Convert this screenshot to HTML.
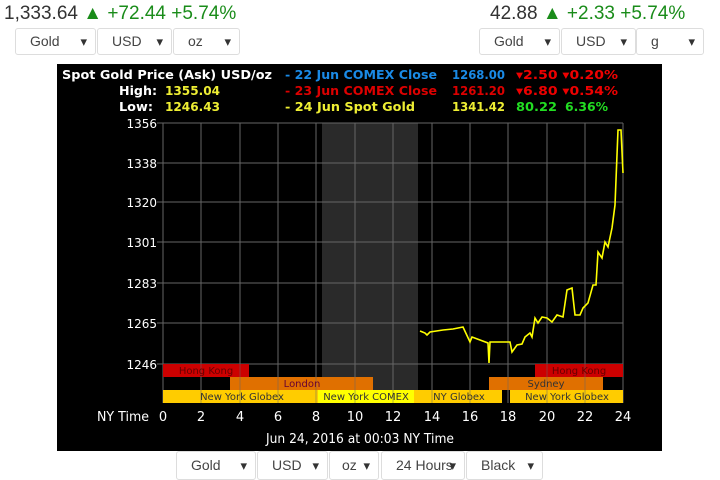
<!DOCTYPE html><html><head><style>
body{margin:0;width:720px;height:480px;background:#fff;font-family:"Liberation Sans",sans-serif;position:relative;overflow:hidden}
.t{position:absolute;font-size:19px;color:#333;top:3px}
.g{color:#1a8c1a}
.s{position:absolute;height:27px;border:1px solid #ddd;border-radius:3px;box-sizing:border-box;font-size:14px;color:#444;line-height:25px;padding-left:14px}
.s:after{content:"▾";position:absolute;right:8px;font-size:13px;color:#333}
</style></head><body>
<div class="t" style="left:4px">1,333.64 <span class="g">▲ +72.44 +5.74%</span></div>
<div class="t" style="left:490px">42.88 <span class="g">▲ +2.33 +5.74%</span></div>
<div class="s" style="left:15px;top:28px;width:81px">Gold</div>
<div class="s" style="left:97px;top:28px;width:75px">USD</div>
<div class="s" style="left:173px;top:28px;width:67px">oz</div>
<div class="s" style="left:479px;top:28px;width:81px">Gold</div>
<div class="s" style="left:561px;top:28px;width:75px">USD</div>
<div class="s" style="left:636px;top:28px;width:68px">g</div>
<svg style="position:absolute;left:57px;top:64px" width="605" height="387" viewBox="57 64 605 387" font-family="DejaVu Sans,sans-serif">
<rect x="57" y="64" width="605" height="387" fill="#000"/>
<rect x="322" y="123" width="96" height="267" fill="#2a2a2a"/>
<g stroke="#666" stroke-width="1">
<path d="M163 123V403M201 123V403M240 123V403M278 123V403M316 123V403M355 123V403M393 123V403M432 123V403M470 123V403M508 123V403M547 123V403M585 123V403M623 123V403"/>
<path d="M157 123H623M157 163H623M157 202H623M157 242H623M157 283H623M157 323H623M157 364H623"/>
</g>
<g font-size="12" fill="#fff" text-anchor="end"><text x="157" y="128">1356</text><text x="157" y="168">1338</text><text x="157" y="207">1320</text><text x="157" y="247">1301</text><text x="157" y="288">1283</text><text x="157" y="328">1265</text><text x="157" y="369">1246</text></g>
<rect x="163" y="364" width="86" height="13" fill="#c00"/><rect x="535" y="364" width="88" height="13" fill="#c00"/>
<rect x="230" y="377" width="143" height="13" fill="#e07000"/><rect x="489" y="377" width="114" height="13" fill="#e07000"/>
<rect x="163" y="390" width="155" height="13" fill="#fc0"/><rect x="318" y="390" width="96" height="13" fill="#ff0"/><rect x="414" y="390" width="88" height="13" fill="#fc0"/><rect x="510" y="390" width="113" height="13" fill="#fc0"/>
<g stroke="#666" opacity="0.5"><path d="M201 364V403M240 364V403M278 364V403M316 364V403M355 364V403M393 364V403M432 364V403M470 364V403M508 364V403M547 364V403M585 364V403"/></g>
<g font-size="10" fill="#333" text-anchor="middle"><text x="206" y="374" fill="#600">Hong Kong</text><text x="579" y="374" fill="#600">Hong Kong</text><text x="302" y="387" fill="#603">London</text><text x="546" y="387">Sydney</text><text x="242" y="400">New York Globex</text><text x="366" y="400">New York COMEX</text><text x="459" y="400">NY Globex</text><text x="567" y="400">New York Globex</text></g>
<polyline fill="none" stroke="#ff0" stroke-width="1.6" points="420,331 425,333 427,335 430,332 443,330 453,329 463,327 470,342 472,337 480,340 488,343 489,363 490,342 510,342 512,352 517,345 522,344 525,337 530,333 532,337 535,318 538,323 542,317 547,318 552,322 557,315 563,317 567,290 572,288 575,315 580,315 583,308 588,303 593,285 596,285 598,252 602,258 605,242 608,247 612,228 615,205 618,130 621,130 623,173"/>
<g font-size="13" fill="#fff" text-anchor="middle"><text x="163" y="421">0</text><text x="201" y="421">2</text><text x="240" y="421">4</text><text x="278" y="421">6</text><text x="316" y="421">8</text><text x="355" y="421">10</text><text x="393" y="421">12</text><text x="432" y="421">14</text><text x="470" y="421">16</text><text x="508" y="421">18</text><text x="547" y="421">20</text><text x="585" y="421">22</text><text x="623" y="421">24</text><text x="123" y="421" textLength="52" lengthAdjust="spacingAndGlyphs">NY Time</text><text x="360" y="443" textLength="188" lengthAdjust="spacingAndGlyphs">Jun 24, 2016 at 00:03 NY Time</text></g>
<g font-size="12.5" font-weight="bold">
<text x="62" y="79" fill="#fff" textLength="210" lengthAdjust="spacingAndGlyphs">Spot Gold Price (Ask) USD/oz</text>
<text x="119" y="95" fill="#fff" textLength="38" lengthAdjust="spacingAndGlyphs">High:</text><text x="165" y="95" fill="#ee3" textLength="55" lengthAdjust="spacingAndGlyphs">1355.04</text>
<text x="119" y="111" fill="#fff" textLength="34" lengthAdjust="spacingAndGlyphs">Low:</text><text x="165" y="111" fill="#ee3" textLength="55" lengthAdjust="spacingAndGlyphs">1246.43</text>
<text x="285" y="79" fill="#1a8ae6" textLength="152" lengthAdjust="spacingAndGlyphs">- 22 Jun COMEX Close</text><text x="452" y="79" fill="#1a8ae6" textLength="53" lengthAdjust="spacingAndGlyphs">1268.00</text><text x="516" y="79" fill="#e00" textLength="102" lengthAdjust="spacingAndGlyphs">▾2.50 ▾0.20%</text>
<text x="285" y="95" fill="#d00" textLength="152" lengthAdjust="spacingAndGlyphs">- 23 Jun COMEX Close</text><text x="452" y="95" fill="#d00" textLength="53" lengthAdjust="spacingAndGlyphs">1261.20</text><text x="516" y="95" fill="#e00" textLength="102" lengthAdjust="spacingAndGlyphs">▾6.80 ▾0.54%</text>
<text x="285" y="111" fill="#ee3" textLength="130" lengthAdjust="spacingAndGlyphs">- 24 Jun Spot Gold</text><text x="452" y="111" fill="#ee3" textLength="53" lengthAdjust="spacingAndGlyphs">1341.42</text><text x="516" y="111" fill="#2d2" textLength="41" lengthAdjust="spacingAndGlyphs">80.22</text><text x="565" y="111" fill="#2d2" textLength="43" lengthAdjust="spacingAndGlyphs">6.36%</text>
</g>
</svg>
<div class="s" style="left:176px;top:451px;width:80px;height:29px;line-height:27px">Gold</div>
<div class="s" style="left:257px;top:451px;width:71px;height:29px;line-height:27px">USD</div>
<div class="s" style="left:329px;top:451px;width:50px;height:29px;line-height:27px;padding-left:12px">oz</div>
<div class="s" style="left:381px;top:451px;width:84px;height:29px;line-height:27px">24 Hours</div>
<div class="s" style="left:466px;top:451px;width:77px;height:29px;line-height:27px">Black</div>
</body></html>
